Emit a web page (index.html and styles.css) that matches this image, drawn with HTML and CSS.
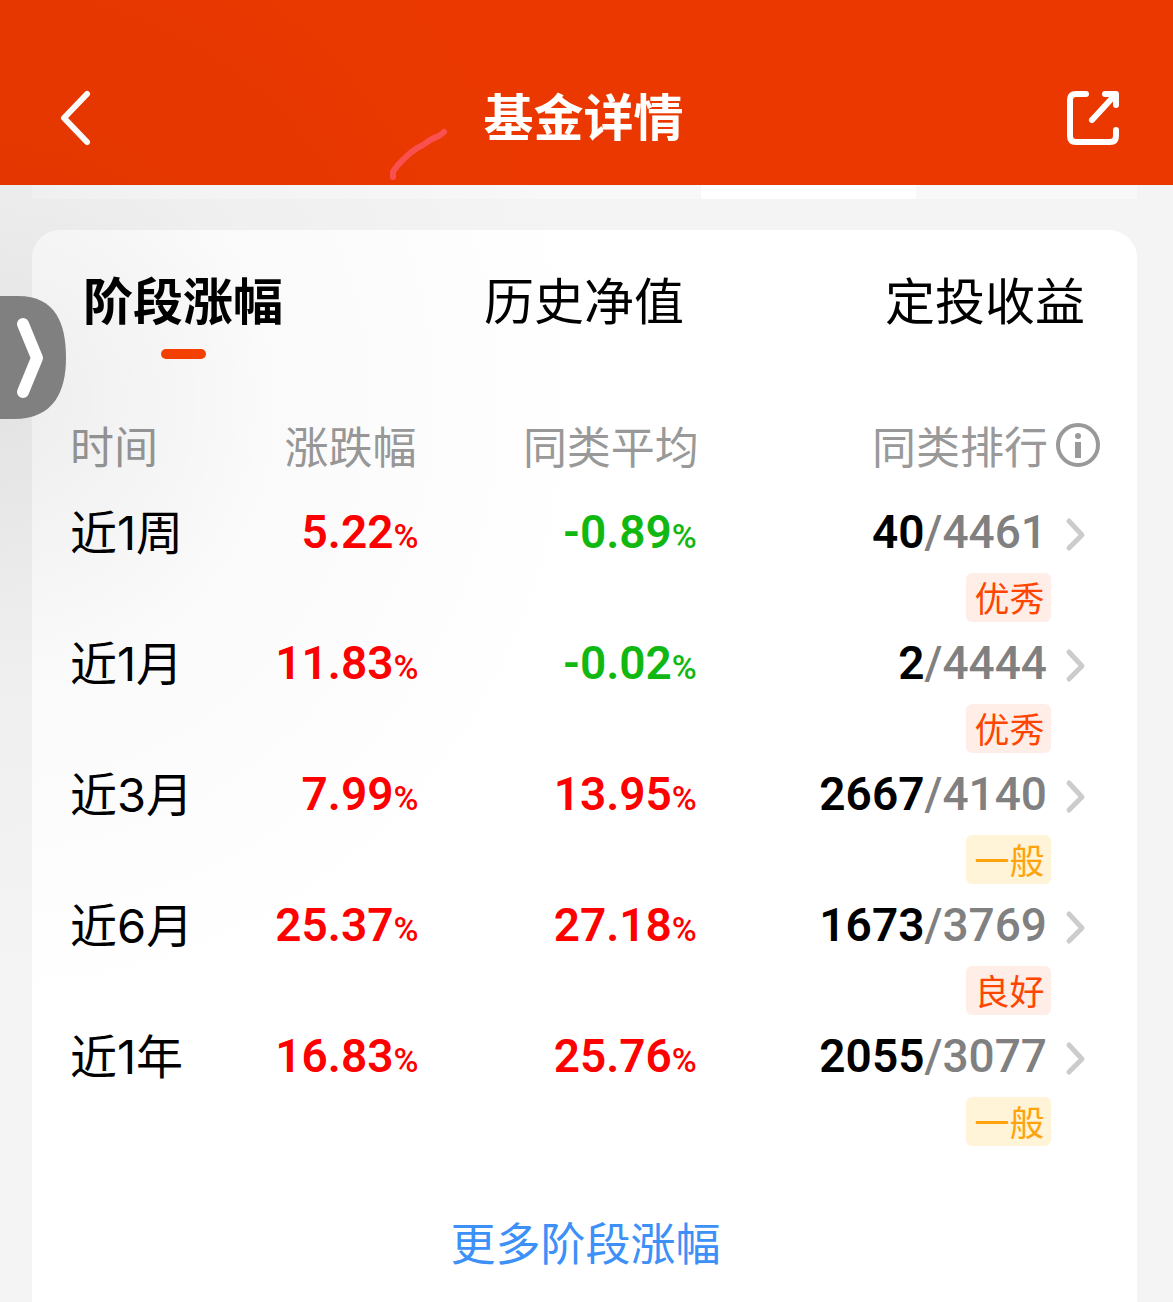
FILE: index.html
```html
<!DOCTYPE html>
<html lang="zh-CN">
<head>
    <meta charset="UTF-8">
    <meta name="viewport" content="width=device-width, initial-scale=1.0">
    <title>基金详情</title>
    <link rel="stylesheet" href="styles.css">
</head>
<body>

    <!-- Top Bar -->
    <header class="top-bar">
        <button class="icon-btn back" aria-label="返回">
            <svg width="36" height="60" viewBox="0 0 36 60"><path d="M29 6L6 30L29 54"/></svg>
        </button>
        <h1>基金详情</h1>
        <button class="icon-btn" aria-label="分享">
            <svg width="60" height="60" viewBox="0 0 60 60"><path d="M23 6H13Q7 6 7 12V48Q7 54 13 54H47Q53 54 53 48V42M42 6H53V17M52 7L29 32"/></svg>
        </button>
        <svg class="scribble" width="64" height="56" viewBox="0 0 64 56"><path d="M7 49V44Q11 37 20 29Q28 21 37 17Q46 10 53 8L58 4"/></svg>
    </header>

    <!-- Side Handle -->
    <button class="side-handle" aria-label="展开">
        <svg width="66" height="123" viewBox="0 0 66 123"><path class="shape" d="M0 0H18C56 0 66 28 66 62C66 95 54 123 14 123H0Z"/><path d="M23 28L37 62L23 96"/></svg>
    </button>

    <main>
        <div class="prev-card"><div class="prev-active"></div></div>

        <section class="card">
            <nav class="tabs">
                <a href="#" class="tab active">阶段涨幅</a>
                <a href="#" class="tab">历史净值</a>
                <a href="#" class="tab">定投收益</a>
            </nav>

            <table>
                <thead>
                    <tr>
                        <th class="time">时间</th>
                        <th class="rate">涨跌幅</th>
                        <th class="average">同类平均</th>
                        <th>
                            <div class="rank-head">
                                同类排行
                                <svg width="45" height="45" viewBox="0 0 45 45"><circle class="ring" cx="22" cy="22" r="20"/><circle cx="22" cy="13" r="3"/><path d="M22 19V35"/></svg>
                            </div>
                        </th>
                    </tr>
                </thead>
                <tbody>
                    <tr>
                        <td class="time">近1周</td>
                        <td class="up">5.22<span class="pct">%</span></td>
                        <td class="down">-0.89<span class="pct">%</span></td>
                        <td>
                            <a href="#" class="rank"><b>40</b>/4461<svg width="54" height="40" viewBox="0 0 54 40"><path d="M22 9L35 23L22 36"/></svg></a>
                            <span class="tag great">优秀</span>
                        </td>
                    </tr>
                    <tr>
                        <td class="time">近1月</td>
                        <td class="up">11.83<span class="pct">%</span></td>
                        <td class="down">-0.02<span class="pct">%</span></td>
                        <td>
                            <a href="#" class="rank"><b>2</b>/4444<svg width="54" height="40" viewBox="0 0 54 40"><path d="M22 9L35 23L22 36"/></svg></a>
                            <span class="tag great">优秀</span>
                        </td>
                    </tr>
                    <tr>
                        <td class="time">近3月</td>
                        <td class="up">7.99<span class="pct">%</span></td>
                        <td class="up">13.95<span class="pct">%</span></td>
                        <td>
                            <a href="#" class="rank"><b>2667</b>/4140<svg width="54" height="40" viewBox="0 0 54 40"><path d="M22 9L35 23L22 36"/></svg></a>
                            <span class="tag normal">一般</span>
                        </td>
                    </tr>
                    <tr>
                        <td class="time">近6月</td>
                        <td class="up">25.37<span class="pct">%</span></td>
                        <td class="up">27.18<span class="pct">%</span></td>
                        <td>
                            <a href="#" class="rank"><b>1673</b>/3769<svg width="54" height="40" viewBox="0 0 54 40"><path d="M22 9L35 23L22 36"/></svg></a>
                            <span class="tag great">良好</span>
                        </td>
                    </tr>
                    <tr>
                        <td class="time">近1年</td>
                        <td class="up">16.83<span class="pct">%</span></td>
                        <td class="up">25.76<span class="pct">%</span></td>
                        <td>
                            <a href="#" class="rank"><b>2055</b>/3077<svg width="54" height="40" viewBox="0 0 54 40"><path d="M22 9L35 23L22 36"/></svg></a>
                            <span class="tag normal">一般</span>
                        </td>
                    </tr>
                </tbody>
            </table>

            <a href="#" class="more">更多阶段涨幅</a>
        </section>
    </main>

</body>
</html>
```
FILE: styles.css
```css
* {
    margin: 0;
    padding: 0;
    box-sizing: border-box;
}
body {
    position: relative;
    display: flex;
    flex-direction: column;
    min-height: 100vh;
    font-family: "Noto Sans CJK SC", sans-serif;
    background: #f4f4f4;
    color: black;
}
/* Soft shade on the left side of the screen */
body::after {
    content: "";
    position: absolute;
    inset: 0;
    background: radial-gradient(ellipse 600px 620px at 0 400px, rgba(0, 0, 0, 0.07), rgba(0, 0, 0, 0.02) 45%, transparent);
    pointer-events: none;
}
a {
    color: inherit;
    text-decoration: none;
}
button {
    border: none;
    background: transparent;
    cursor: pointer;
}
svg {
    display: block;
    flex: none;
    fill: none;
    stroke-linecap: round;
    stroke-linejoin: round;
}
.top-bar {
    position: relative;
    display: flex;
    justify-content: space-between;
    align-items: center;
    padding: 51px 50px 0 58px;
    height: 185px;
    background: #ea3800;
    color: white;
}
.top-bar h1 {
    padding-bottom: 8px;
    font-size: 50px;
    line-height: 72px;
}
.icon-btn {
    display: flex;
}
.icon-btn.back {
    width: 46px;
}
.icon-btn svg {
    stroke: white;
    stroke-width: 6;
}
.scribble {
    position: absolute;
    left: 386px;
    top: 128px;
    stroke: #fb5050;
    stroke-width: 6;
}
.side-handle {
    position: absolute;
    left: 0;
    top: 296px;
    z-index: 1;
}
.side-handle svg {
    stroke: white;
    stroke-width: 12;
}
.side-handle .shape {
    fill: #808080;
    stroke: none;
}
main {
    flex: 1;
    display: flex;
    flex-direction: column;
    padding: 0 36px 0 32px;
}
.prev-card {
    display: grid;
    grid-template-columns: 669fr 215fr 221fr;
    height: 14px;
    margin-bottom: 31px;
    background: #f8f8f8;
}
.prev-active {
    grid-column: 2;
    background: white;
}
.card {
    flex: 1;
    padding: 36px 36px 24px 38px;
    background: white;
    border-radius: 28px 28px 0 0;
}
.tabs {
    display: flex;
    justify-content: space-between;
    padding: 0 16px 0 13px;
    font-size: 50px;
    line-height: 64px;
}
.tab::after {
    content: "";
    display: block;
    width: 45px;
    height: 10px;
    margin: 19px auto 44px;
    border-radius: 5px;
}
.tab.active {
    font-weight: bold;
}
.tab.active::after {
    background: #fc4200;
}
table {
    width: 100%;
    table-layout: fixed;
    border-collapse: collapse;
}
th {
    height: 88px;
    padding-bottom: 4px;
    font-size: 44px;
    font-weight: normal;
    line-height: 64px;
    color: #999;
    text-align: right;
}
th.time {
    width: 14%;
}
th.rate {
    width: 20%;
    padding-right: 4px;
}
th.average {
    width: 27%;
}
.rank-head {
    display: flex;
    justify-content: flex-end;
    align-items: center;
    gap: 8px;
}
.rank-head svg {
    fill: #999;
    stroke: #999;
    stroke-width: 0;
}
.rank-head .ring {
    fill: none;
    stroke-width: 4;
}
.rank-head path {
    stroke-width: 6;
    stroke-linecap: butt;
}
td {
    font-family: Roboto, sans-serif;
    font-size: 46px;
    font-weight: 600;
    line-height: 82px;
    text-align: right;
    vertical-align: top;
    white-space: nowrap;
}
.time {
    text-align: left;
}
td.time {
    font-family: Inter, "Noto Sans CJK SC", sans-serif;
    font-size: 47px;
    font-weight: normal;
    line-height: 84px;
}
.up, .down {
    padding-right: 2px;
}
.up {
    color: #ff0000;
}
.down {
    color: #12b812;
}
.pct {
    font-size: 34px;
    font-weight: 500;
}
.rank {
    display: flex;
    justify-content: flex-end;
    align-items: center;
    color: #808080;
    font-weight: 500;
}
.rank b {
    color: black;
    font-weight: 600;
}
.rank svg {
    stroke: #ccc;
    stroke-width: 5;
}
.tag {
    display: block;
    width: 85px;
    padding: 0 0 2px 2px;
    margin: 0 50px 0 auto;
    border-radius: 6px;
    font-family: "Noto Sans CJK SC", sans-serif;
    font-size: 35px;
    font-weight: normal;
    line-height: 47px;
    text-align: center;
}
.tag.great {
    background: #ffeee8;
    color: #ff4600;
}
.tag.normal {
    background: #fff4d8;
    color: #ffa30c;
}
.more {
    display: block;
    margin-top: 64px;
    font-size: 45px;
    line-height: 64px;
    color: #3c90f8;
    text-align: center;
}
```
